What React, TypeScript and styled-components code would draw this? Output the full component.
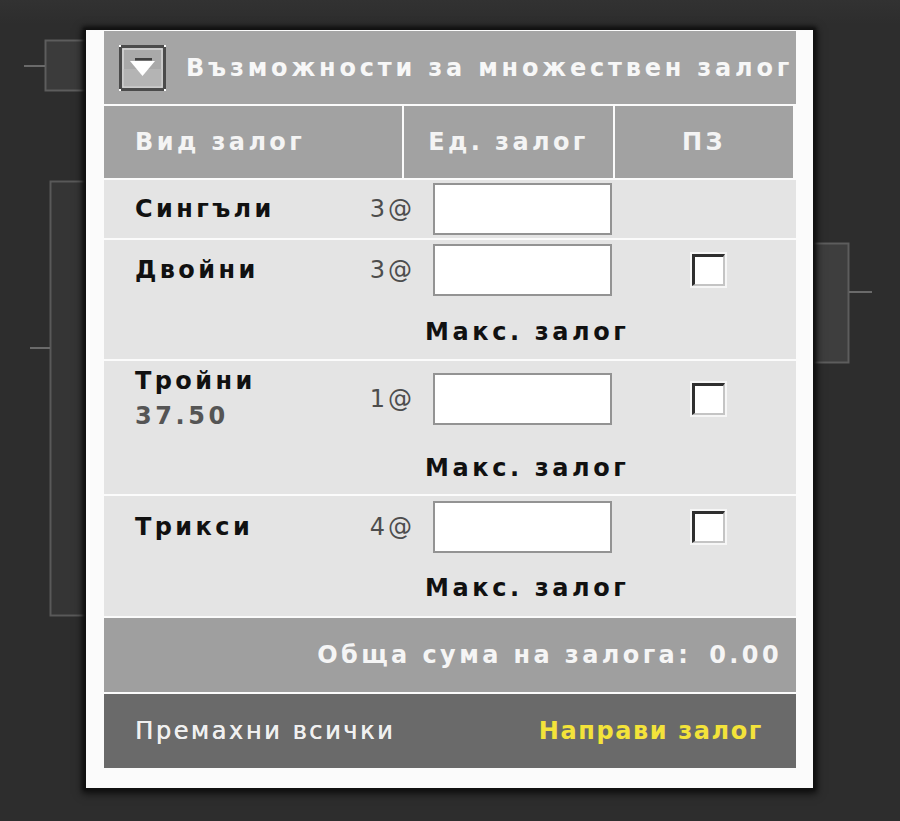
import React from "react";
import styled, { createGlobalStyle } from "styled-components";

const GlobalStyle = createGlobalStyle`
  html, body { margin: 0; padding: 0; }
  body {
    background: #2d2d2d;
    font-family: "DejaVu Sans", Verdana, sans-serif;
  }
`;

const Stage = styled.div`
  position: relative;
  width: 900px;
  height: 821px;
  box-sizing: border-box;
  padding: 30px 0 0 86px;
  background: linear-gradient(#323232 0, #2d2d2d 24px, #2d2d2d 100%);
  overflow: hidden;
`;

const Decor = styled.svg`
  position: absolute;
  left: 0;
  top: 0;
  width: 900px;
  height: 821px;
`;

const Panel = styled.div`
  position: relative;
  width: 727px;
  box-sizing: border-box;
  background: #fbfbfb;
  padding: 1px 17px 20px 18px;
  display: flex;
  flex-direction: column;
  gap: 2px;
  box-shadow: 0 0 3px 3px #111, 0 2px 8px 4px rgba(0, 0, 0, 0.6);
`;

const Header = styled.div`
  height: 73px;
  background: #a5a5a5;
  display: flex;
  align-items: center;
  gap: 20px;
  padding-left: 15px;
  overflow: hidden;
`;

const Title = styled.span`
  color: #f7f7f7;
  font-weight: bold;
  font-size: 24px;
  letter-spacing: 3.8px;
  white-space: nowrap;
  margin-top: 1px;
`;

const ColHeader = styled.div`
  display: grid;
  grid-template-columns: 298px 209px 178px;
  column-gap: 2px;
  height: 72px;
`;

const ColCell = styled.div<{ $align?: "left" | "center" }>`
  background: #a2a2a2;
  color: #f4f4f4;
  font-weight: bold;
  font-size: 24px;
  letter-spacing: 3.4px;
  display: flex;
  align-items: center;
  justify-content: ${(p) => (p.$align === "left" ? "flex-start" : "center")};
  padding-left: ${(p) => (p.$align === "left" ? "31px" : "0")};
`;

const BetRow = styled.div<{ $pt: number; $pb: number }>`
  background: #e4e4e4;
  display: grid;
  grid-template-columns: 230px 68px 179px 1fr;
  align-items: center;
  padding: ${(p) => p.$pt}px 0 ${(p) => p.$pb}px 31px;
`;

const NameBlock = styled.div`
  display: flex;
  flex-direction: column;
  line-height: 35px;
`;

const BetName = styled.span`
  color: #111;
  font-weight: bold;
  font-size: 24px;
  letter-spacing: 3.4px;
`;

const BetOdds = styled.span`
  color: #555;
  font-weight: bold;
  font-size: 24px;
  letter-spacing: 3.6px;
`;

const Multiplier = styled.span`
  color: #4d4d4d;
  font-size: 24px;
  letter-spacing: 3px;
  text-align: right;
  padding-right: 18px;
`;

const StakeInput = styled.input`
  width: 179px;
  height: 52px;
  box-sizing: border-box;
  border: 2px solid #939393;
  background: #fff;
  margin: 0;
  padding: 0 6px;
  font-size: 20px;
  font-family: inherit;
  outline: none;
`;

const CheckCell = styled.div`
  display: flex;
  justify-content: center;
  padding-left: 8px;
`;

const Check = styled.input`
  appearance: none;
  margin: 0;
  width: 33px;
  height: 32px;
  box-sizing: border-box;
  background: #fff;
  border-top: 3px solid #2f2f2f;
  border-left: 3px solid #2f2f2f;
  border-right: 2px solid #c4c4c4;
  border-bottom: 2px solid #c4c4c4;
  box-shadow: 0 0 0 2px #f6f6f6;
`;

const MaxLine = styled.div<{ $mt: number }>`
  grid-column: 2 / -1;
  padding-left: 60px;
  margin-top: ${(p) => p.$mt}px;
  line-height: 24px;
  color: #111;
  font-weight: bold;
  font-size: 24px;
  letter-spacing: 3.6px;
`;

const TotalRow = styled.div`
  height: 74px;
  background: #9f9f9f;
  display: flex;
  align-items: center;
  justify-content: flex-end;
  gap: 18px;
  padding-right: 14px;
  color: #f5f5f5;
  font-weight: bold;
  font-size: 24px;
  letter-spacing: 3.4px;
`;

const Footer = styled.div`
  height: 74px;
  background: #6a6a6a;
  display: flex;
  align-items: center;
  justify-content: space-between;
  padding: 0 33px 0 31px;
  font-size: 24px;
`;

const FooterLink = styled.span<{ $accent?: boolean }>`
  color: ${(p) => (p.$accent ? "#f3e33a" : "#f0f0f0")};
  font-weight: ${(p) => (p.$accent ? "bold" : "normal")};
  letter-spacing: ${(p) => (p.$accent ? "1.6px" : "2.6px")};
  ${(p) => (p.$accent ? "" : "text-shadow: 0.5px 0 0 #f0f0f0;")}
`;

const ToggleIcon = () => (
  <svg width="47" height="46" viewBox="0 0 47 46">
    <rect x="1.5" y="1.5" width="44" height="43" fill="#a9a9a9" stroke="#4b4b4b" strokeWidth="3" />
    <rect x="4" y="4" width="39" height="38" fill="none" stroke="#d6d6d6" strokeWidth="1.5" />
    <rect x="4.75" y="24" width="37.5" height="17.25" fill="#b4b4b4" />
    <rect x="16" y="13" width="17" height="2.5" fill="#3f3f3f" />
    <polygon points="11,16 36,16 23.5,31" fill="#ffffff" />
    <rect x="0" y="0" width="2" height="2" fill="#fff" />
    <rect x="45" y="0" width="2" height="2" fill="#fff" />
    <rect x="0" y="44" width="2" height="2" fill="#fff" />
    <rect x="45" y="44" width="2" height="2" fill="#fff" />
  </svg>
);

type Bet = {
  name: string;
  odds?: string;
  mult: string;
  check: boolean;
  max: boolean;
  pt: number;
  pb: number;
  mt: number;
};

const bets: Bet[] = [
  { name: "Сингъли", mult: "3@", check: false, max: false, pt: 3, pb: 3, mt: 0 },
  { name: "Двойни", mult: "3@", check: true, max: true, pt: 4, pb: 15, mt: 24 },
  { name: "Тройни", odds: "37.50", mult: "1@", check: true, max: true, pt: 3, pb: 14, mt: 22 },
  { name: "Трикси", mult: "4@", check: true, max: true, pt: 5, pb: 16, mt: 23 },
];

export default function App() {
  return (
    <>
      <GlobalStyle />
      <Stage>
        <Decor viewBox="0 0 900 821">
          <rect x="45.5" y="40.5" width="60" height="50" fill="#3b3b3b" stroke="#5d5d5d" strokeWidth="2" />
          <line x1="24" y1="66" x2="45" y2="66" stroke="#6a6a6a" strokeWidth="2" />
          <rect x="50.5" y="181.5" width="60" height="434" fill="#353535" stroke="#595959" strokeWidth="2" />
          <line x1="30" y1="348" x2="50" y2="348" stroke="#6a6a6a" strokeWidth="2" />
          <rect x="780" y="243.5" width="68.5" height="119" fill="#3e3e3e" stroke="#5d5d5d" strokeWidth="2" />
          <line x1="849" y1="292" x2="872" y2="292" stroke="#6a6a6a" strokeWidth="2" />
        </Decor>
        <Panel>
          <Header>
            <ToggleIcon />
            <Title>Възможности за множествен залог</Title>
          </Header>
          <ColHeader>
            <ColCell $align="left">Вид залог</ColCell>
            <ColCell>Ед. залог</ColCell>
            <ColCell>ПЗ</ColCell>
          </ColHeader>
          {bets.map((b) => (
            <BetRow key={b.name} $pt={b.pt} $pb={b.pb}>
              <NameBlock>
                <BetName>{b.name}</BetName>
                {b.odds && <BetOdds>{b.odds}</BetOdds>}
              </NameBlock>
              <Multiplier>{b.mult}</Multiplier>
              <StakeInput type="text" />
              <CheckCell>{b.check && <Check type="checkbox" />}</CheckCell>
              {b.max && <MaxLine $mt={b.mt}>Макс. залог</MaxLine>}
            </BetRow>
          ))}
          <TotalRow>
            <span>Обща сума на залога:</span>
            <span>0.00</span>
          </TotalRow>
          <Footer>
            <FooterLink>Премахни всички</FooterLink>
            <FooterLink $accent>Направи залог</FooterLink>
          </Footer>
        </Panel>
      </Stage>
    </>
  );
}
